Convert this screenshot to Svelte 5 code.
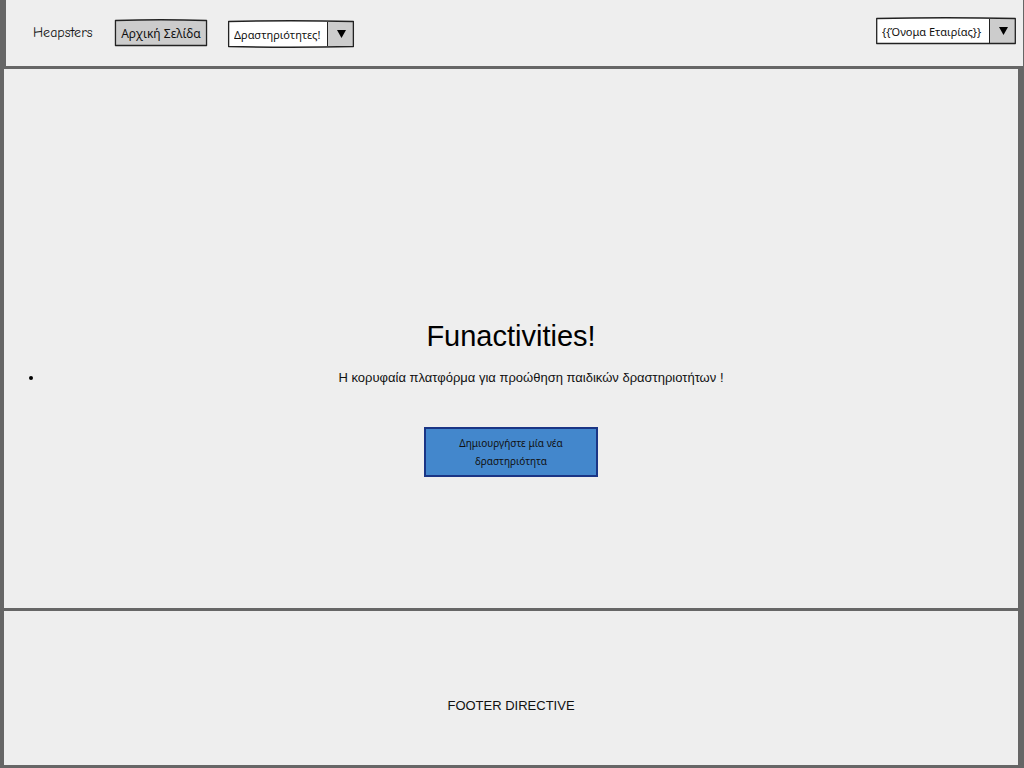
<script>
  const menus = {
    activities: { label: 'Δραστηριότητες!', top: -1, bottom: 27 },
    company: { label: '{{Όνομα Εταιρίας}}', top: -1, bottom: 25.5 }
  };
</script>

{#snippet dropdown(id, menu)}
  <div class="dropdown {id}">
    <svg class="sketch" viewBox="0 0 100 26" preserveAspectRatio="none" aria-hidden="true">
      <path d="M0.5 0.5 Q50 {menu.top} 99.5 0.5 V25.5 Q50 {menu.bottom} 0.5 25.5 Z" fill="#fff" />
    </svg>
    <select aria-label={menu.label}>
      <option>{menu.label}</option>
    </select>
    <span class="arrow" aria-hidden="true">
      <svg width="9" height="8" viewBox="0 0 9 8"><path d="M0 0H9L4.5 8Z" fill="#000" /></svg>
    </span>
    <svg class="sketch outline" viewBox="0 0 100 26" preserveAspectRatio="none" aria-hidden="true">
      <path d="M0.5 0.5 Q50 {menu.top} 99.5 0.5 V25.5 Q50 {menu.bottom} 0.5 25.5 Z" />
    </svg>
  </div>
{/snippet}

<div class="page">
  <header>
    <span class="brand">Heapsters</span>
    <button class="home" type="button">
      <svg class="sketch outline" viewBox="0 0 100 26" preserveAspectRatio="none" aria-hidden="true">
        <path d="M0.5 0.5 Q50 -1 99.5 0.5 V25.5 H0.5 Z" fill="#ccc" />
      </svg>
      <span>Αρχική Σελίδα</span>
    </button>
    {@render dropdown('activities', menus.activities)}
    {@render dropdown('company', menus.company)}
  </header>

  <main>
    <h1>Funactivities!</h1>
    <ul>
      <li><span>Η κορυφαία πλατφόρμα για προώθηση παιδικών δραστηριοτήτων !</span></li>
    </ul>
    <button class="create" type="button">Δημιουργήστε μία νέα δραστηριότητα</button>
  </main>

  <footer>FOOTER DIRECTIVE</footer>
</div>

<style>
  :global(body) {
    margin: 0;
    background: #666;
  }

  .page {
    box-sizing: border-box;
    min-height: 100vh;
    padding-bottom: 3px;
    display: grid;
    grid-template-rows: 66px 1fr 154px;
    gap: 3px;
    background: #666;
    color: #111;
    font: 13px/18px "Liberation Sans", Arial, sans-serif;
  }

  header,
  main,
  footer {
    background: #eee;
  }

  header {
    margin: 0 1px 0 6px;
    padding: 0 7px 0 27px;
    display: flex;
    align-items: center;
  }

  .home,
  select,
  .create {
    font-family: "Noto Sans", sans-serif;
  }

  .brand {
    width: 82px;
    font-family: "Comic Sans MS", "Comic Neue", "Noto Sans", sans-serif;
    font-size: 14px;
  }

  .home {
    position: relative;
    width: 92px;
    height: 26px;
    margin-right: 21px;
    padding: 2px 0 0;
    border: 0;
    background: none;
    color: #111;
    font-size: 12px;
    line-height: 18px;
    white-space: nowrap;
  }

  .home span {
    position: relative;
  }

  .sketch {
    position: absolute;
    inset: 0;
    width: 100%;
    height: 100%;
    overflow: visible;
    pointer-events: none;
  }

  .sketch path {
    vector-effect: non-scaling-stroke;
  }

  .outline path {
    stroke: #222;
    stroke-width: 1.3;
    stroke-linejoin: round;
  }

  .dropdown .outline path {
    fill: none;
  }

  .dropdown {
    position: relative;
    display: flex;
    height: 26px;
  }

  .activities {
    width: 126px;
    margin-top: 2px;
  }

  .company {
    width: 140px;
    margin-left: auto;
    margin-bottom: 4px;
  }

  select {
    position: relative;
    flex: 1;
    min-width: 0;
    padding: 1px 0 0 6px;
    border: 0;
    appearance: none;
    background: none;
    color: #111;
    font-size: 11px;
    line-height: 18px;
  }

  .arrow {
    position: relative;
    box-sizing: border-box;
    width: 27px;
    margin: 1px 0;
    display: grid;
    place-items: center;
    border-left: 1px solid #222;
    background: #ccc;
    pointer-events: none;
  }

  main {
    margin: 0 6px 0 4px;
    padding-top: 249px;
    display: flex;
    flex-direction: column;
    align-items: center;
  }

  h1 {
    margin: 0;
    color: #000;
    font-size: 29px;
    font-weight: 400;
    line-height: 36px;
  }

  ul {
    box-sizing: border-box;
    width: 100%;
    margin: 15px 0 40px;
    padding: 0 0 0 25px;
    list-style: none;
  }

  li {
    display: flex;
    align-items: center;
    text-align: center;
  }

  li::before {
    content: "";
    width: 4px;
    height: 4px;
    margin-right: 11px;
    border-radius: 50%;
    background: #000;
  }

  li span {
    flex: 1;
  }

  .create {
    width: 174px;
    height: 50px;
    padding: 0 24px;
    border: 2px solid #1a3585;
    background: #4387cc;
    color: #111;
    font-size: 10px;
    line-height: 18px;
  }

  footer {
    margin: 0 6px 0 4px;
    padding-top: 36px;
    display: grid;
    place-items: center;
  }
</style>
